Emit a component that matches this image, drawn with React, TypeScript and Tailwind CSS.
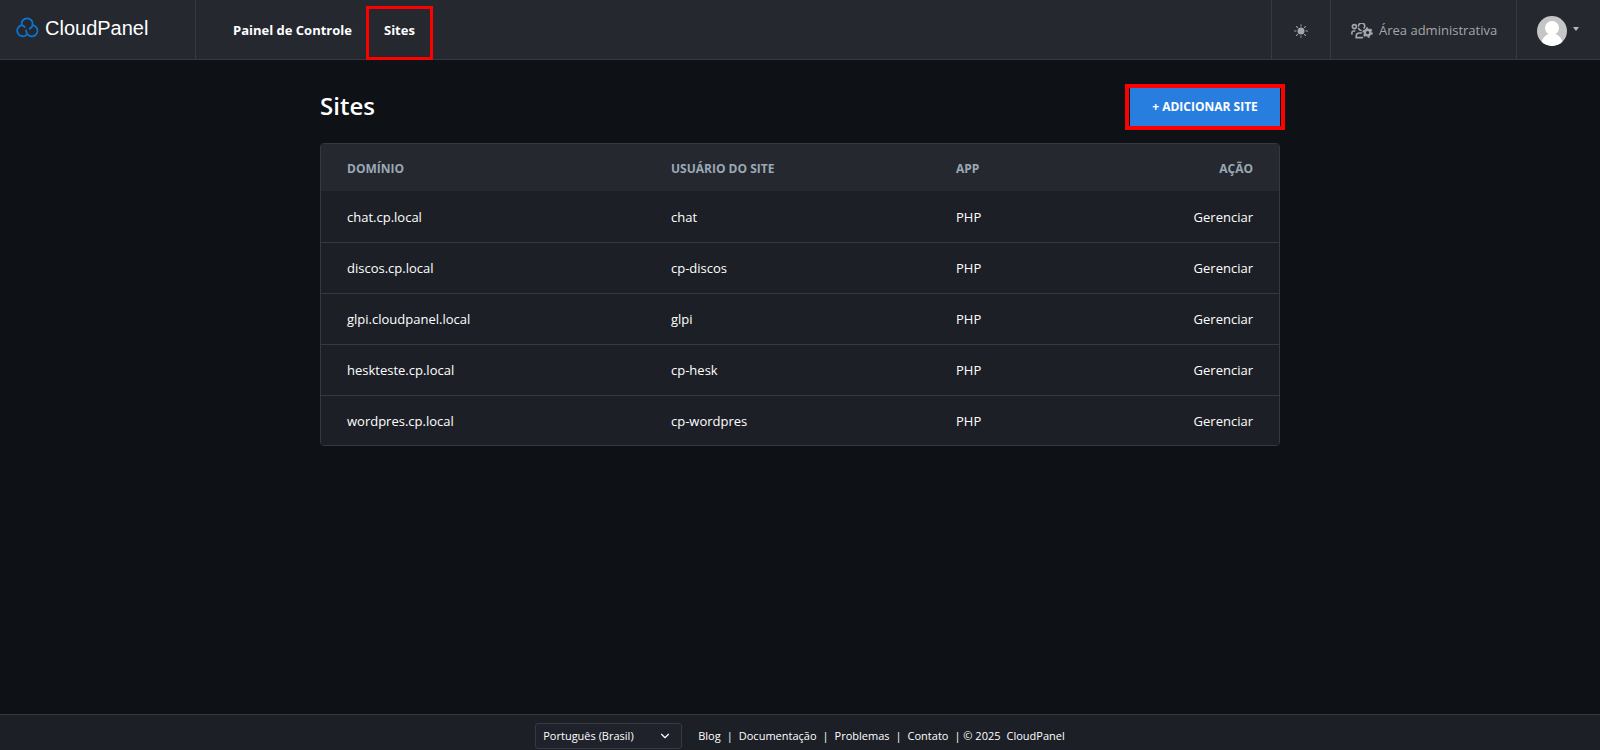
import { BsSunFill } from 'react-icons/bs';
import { ChevronDown } from 'lucide-react';

const sites = [
  { domain: 'chat.cp.local', user: 'chat', app: 'PHP' },
  { domain: 'discos.cp.local', user: 'cp-discos', app: 'PHP' },
  { domain: 'glpi.cloudpanel.local', user: 'glpi', app: 'PHP' },
  { domain: 'heskteste.cp.local', user: 'cp-hesk', app: 'PHP' },
  { domain: 'wordpres.cp.local', user: 'cp-wordpres', app: 'PHP' },
];

function CloudLogo() {
  return (
    <svg width="23" height="21" viewBox="0 0 23 21" fill="none" stroke="#0b76d1" strokeWidth="1.7" strokeLinecap="round" aria-hidden="true">
      <path d="M5.600 8A5.600 5.600 0 1 1 16.600 8C16.300 9.800 15.300 11 13.600 11.600" />
      <path d="M8.600 10.200C8 8.900 7 8.300 5.600 8.200A5.600 5.600 0 1 0 10.600 17.800" />
      <path d="M16.600 8.200A5.600 5.600 0 1 1 12.600 18.300C10.700 17 10 15.600 10.100 13.400" />
    </svg>
  );
}

function AdminIcon() {
  return (
    <svg width="22" height="16" viewBox="0 0 22 16" fill="none" stroke="#a5a6a9" strokeWidth="1.600" strokeLinecap="round" aria-hidden="true">
      <circle cx="3.400" cy="3.600" r="2" />
      <path d="M.9 11V9.800A1.900 1.900 0 0 1 2.800 8h1" />
      <path d="M7.500 3A3.100 3.100 0 1 1 13 5M7.600 5.200a3.100 3.100 0 0 0 2.600 2.300" />
      <path d="M11.500 14.600H5.200v-1.300A3.300 3.300 0 0 1 8.500 10h2" />
      <circle cx="16.600" cy="9.600" r="2.800" strokeWidth="2.400" />
      <circle cx="16.600" cy="9.600" r="4.400" strokeWidth="1.700" strokeDasharray="2.100 2.507" strokeLinecap="butt" />
    </svg>
  );
}

function Avatar() {
  return (
    <svg width="30" height="30" viewBox="0 0 30 30" className="rounded-full" aria-hidden="true">
      <rect width="30" height="30" fill="#c5c5c5" />
      <circle cx="15" cy="12" r="7" fill="#fff" />
      <path d="M4 30c0-7 4-11 8-12h6c4 1 8 5 8 12z" fill="#fff" />
    </svg>
  );
}

function Header() {
  return (
    <header className="flex h-[60px] items-stretch border-b border-[#363940] bg-[#25282f]">
      <a href="#" className="flex w-[196px] items-center gap-1.5 border-r border-[#363940] pb-1 pl-4 font-['Liberation_Sans',sans-serif] text-xl text-white">
        <CloudLogo />
        CloudPanel
      </a>
      <nav className="flex gap-3.5 pl-[37px] text-[13px] font-bold text-white">
        <a href="#" className="flex items-center pt-0.5">Painel de Controle</a>
        <a href="#" className="relative flex items-center px-[18px] pt-0.5">
          Sites
          <span className="absolute inset-x-0 top-1.5 bottom-0 -mb-px border-3 border-[#fe0000]" />
        </a>
      </nav>
      <div className="ml-auto flex text-[13px] text-[#a5a6a9]">
        <button aria-label="Tema" className="flex w-[59px] items-center justify-center border-l border-[#363940] pt-0.5">
          <BsSunFill size={14} />
        </button>
        <a href="#" className="flex w-[186px] items-center gap-1.5 border-l border-[#363940] pt-0.5 pl-5 whitespace-nowrap">
          <AdminIcon />
          Área administrativa
        </a>
        <button aria-label="Conta" className="flex w-[84px] items-center gap-1.5 border-l border-[#363940] pt-0.5 pl-5">
          <Avatar />
          <span className="mb-1 border-x-3 border-t-4 border-x-transparent border-t-[#b5b6b9]" />
        </button>
      </div>
    </header>
  );
}

function SitesTable() {
  return (
    <div className="mt-4 overflow-hidden rounded-[4px] border border-[#363940]">
      <table className="w-full table-fixed bg-[#1d1f26] text-left text-[13px] text-white">
        <thead className="bg-[#25282f] text-xs text-[#9aa8b5]">
          <tr className="h-[47px]">
            <th className="w-[324px] pt-0.5 pl-[26px] font-bold">DOMÍNIO</th>
            <th className="w-[285px] pt-0.5 pl-[26px] font-bold">USUÁRIO DO SITE</th>
            <th className="pt-0.5 pl-[26px] font-bold">APP</th>
            <th className="pt-0.5 pr-[26px] text-right font-bold">AÇÃO</th>
          </tr>
        </thead>
        <tbody className="divide-y divide-[#363940]">
          {sites.map(site => (
            <tr key={site.domain} className="h-[51px] last:h-[50px]">
              <td className="pt-0.5 pl-[26px]">{site.domain}</td>
              <td className="pt-0.5 pl-[26px]">{site.user}</td>
              <td className="pt-0.5 pl-[26px]">{site.app}</td>
              <td className="pt-0.5 pr-[26px] text-right"><a href="#">Gerenciar</a></td>
            </tr>
          ))}
        </tbody>
      </table>
    </div>
  );
}

function Footer() {
  return (
    <footer className="flex items-center justify-center gap-4 border-t border-[#363940] bg-[#1d1f26] pt-2 pb-px text-[11px] font-medium text-white">
      <div className="relative">
        <select aria-label="Idioma" className="h-[26px] w-[147px] appearance-none rounded-[3px] border border-[#363940] bg-[#1f222a] pl-[7px]">
          <option>Português (Brasil)</option>
        </select>
        <ChevronDown size={14} className="pointer-events-none absolute top-1.5 right-2.5" />
      </div>
      <div className="flex gap-1.5">
        <a href="#">Blog</a>
        <span>|</span>
        <a href="#">Documentação</a>
        <span>|</span>
        <a href="#">Problemas</a>
        <span>|</span>
        <a href="#">Contato</a>
        <span>| © 2025</span>
        <a href="#">CloudPanel</a>
      </div>
    </footer>
  );
}

export default function App() {
  return (
    <div className="flex min-h-screen flex-col bg-[#0e1116] font-['Open_Sans',sans-serif]">
      <Header />
      <main className="mx-auto w-full max-w-[960px] flex-1 pt-[27px]">
        <div className="flex items-center justify-between">
          <h1 className="pb-0.5 text-2xl font-semibold text-white">Sites</h1>
          <div className="relative">
            <button className="h-10 w-[150px] bg-[#287edf] text-xs font-bold text-white">+ ADICIONAR SITE</button>
            <span className="pointer-events-none absolute -inset-x-[5px] -top-[3px] -bottom-[3px] border-4 border-[#fe0000]" />
          </div>
        </div>
        <SitesTable />
      </main>
      <Footer />
    </div>
  );
}
